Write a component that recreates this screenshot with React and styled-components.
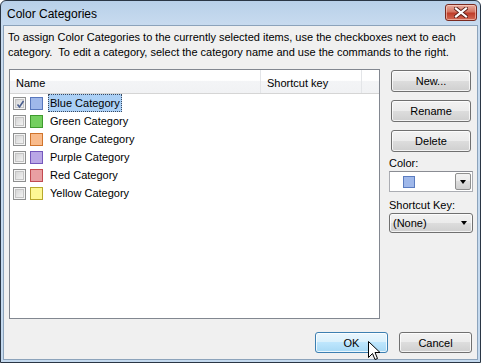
import React from 'react';
import styled, { createGlobalStyle } from 'styled-components';

const Global = createGlobalStyle`
  html, body { margin: 0; padding: 0; background: #ffffff; }
  body {
    font-family: "Liberation Sans", Arial, sans-serif;
    font-size: 11px;
    color: #000;
  }
  * { box-sizing: border-box; }
`;

const Window = styled.div`
  position: relative;
  width: 481px;
  height: 363px;
  border: 1px solid #2a3645;
  border-radius: 6px 6px 0 0;
  background: linear-gradient(#b8d0e9, #c8dbef 24px, #c4d9ee);
  display: flex;
  flex-direction: column;
  overflow: hidden;
`;

const TitleBar = styled.div`
  height: 24px;
  flex: none;
  display: flex;
  align-items: center;
  padding-left: 6px;
  padding-top: 2px;
  font-size: 12px;
  color: #000;
`;

const CloseButton = styled.div`
  position: absolute;
  top: 3px;
  right: 3px;
  width: 32px;
  height: 17px;
  border: 1px solid #7a2a20;
  border-radius: 3px;
  background: linear-gradient(#e8ab9e, #d47562 45%, #bf3d2a 55%, #d26a55);
  box-shadow: inset 0 0 0 1px rgba(255, 220, 210, 0.55);
  display: flex;
  align-items: center;
  justify-content: center;
`;

const Client = styled.div`
  flex: 1;
  margin: 0 2px 2px 2px;
  border: 1px solid #8ca3bb;
  background: #f0f0f0;
  display: flex;
  flex-direction: column;
`;

const Description = styled.div`
  padding: 4px 0 0 4px;
  line-height: 15px;
  white-space: nowrap;
`;

const Body = styled.div`
  display: flex;
  margin-top: 9px;
  padding-left: 5px;
`;

const ListBox = styled.div`
  width: 371px;
  height: 250px;
  border: 1px solid #828790;
  background: #fff;
  display: flex;
  flex-direction: column;
`;

const Header = styled.div`
  display: flex;
  height: 24px;
  border-bottom: 1px solid #d5d5d5;
  background: linear-gradient(#ffffff, #ffffff 45%, #f3f4f6 50%, #f1f2f4);
  flex: none;
`;

const HeaderCell = styled.div`
  width: ${p => p.$w}px;
  flex: ${p => (p.$w ? 'none' : '1')};
  border-right: ${p => (p.$last ? 'none' : '1px solid #e3e5e8')};
  display: flex;
  align-items: center;
  padding-left: 6px;
  padding-top: 3px;
`;

const Rows = styled.div`
  display: flex;
  flex-direction: column;
`;

const Row = styled.div`
  height: 18px;
  display: flex;
  align-items: center;
  padding-left: 3px;
`;

const CheckBox = styled.div`
  width: 13px;
  height: 13px;
  border: 1px solid #8e8f8f;
  background: #f4f4f4;
  padding: 1px;
  flex: none;
  display: flex;
`;

const CheckInner = styled.div`
  flex: 1;
  border: 1px solid #c4c4c4;
  background: linear-gradient(135deg, #d6d6d6, #f2f2f2);
  position: relative;
  display: flex;
  align-items: center;
  justify-content: center;
`;

const Swatch = styled.div`
  width: 13px;
  height: 13px;
  margin-left: 4px;
  border: 1px solid ${p => p.$border};
  background: ${p => p.$fill};
  flex: none;
`;

const Label = styled.div`
  margin-left: 5px;
  height: 18px;
  line-height: 17px;
  padding: 0 1px;
  border: 1px dotted ${p => (p.$selected ? '#3a4a60' : 'transparent')};
  background: ${p => (p.$selected ? '#abd0f6' : 'transparent')};
  white-space: nowrap;
`;

const Side = styled.div`
  width: 84px;
  margin-left: 9px;
  margin-top: 1px;
  display: flex;
  flex-direction: column;
`;

const Button = styled.div`
  height: ${p => p.$h || 22}px;
  width: ${p => p.$w || 80}px;
  margin: ${p => p.$m || '0'};
  border: 1px solid ${p => (p.$default ? '#3c7fb1' : '#707070')};
  border-radius: 3px;
  background: ${p =>
    p.$default
      ? 'linear-gradient(#eaf6fd, #d9f0fc 50%, #bee6fd 50%, #a7d9f5)'
      : 'linear-gradient(#f2f2f2, #ebebeb 50%, #dddddd 50%, #cfcfcf)'};
  box-shadow: inset 0 0 0 1px rgba(255, 255, 255, 0.75);
  display: flex;
  align-items: center;
  justify-content: center;
  flex: none;
`;

const FieldLabel = styled.div`
  line-height: 15px;
  margin-top: ${p => p.$mt}px;
`;

const ColorCombo = styled.div`
  height: 21px;
  border: 1px solid #abadb3;
  border-top-color: #8a8c93;
  background: #fff;
  display: flex;
  align-items: center;
  padding: 1px;
`;

const ComboSwatch = styled.div`
  width: 12px;
  height: 12px;
  margin-left: 12px;
  border: 1px solid #5b7cc0;
  background: #9fb8ea;
`;

const DropButton = styled.div`
  margin-left: auto;
  width: 16px;
  height: 100%;
  border: 1px solid #8f8f8f;
  border-radius: 2px;
  background: linear-gradient(#f2f2f2, #ebebeb 50%, #dddddd 50%, #cfcfcf);
  display: flex;
  align-items: center;
  justify-content: center;
`;

const Arrow = styled.div`
  width: 0;
  height: 0;
  border-left: 3.5px solid transparent;
  border-right: 3.5px solid transparent;
  border-top: 4px solid #000;
`;

const SelectCombo = styled.div`
  height: 20px;
  border: 1px solid #707070;
  border-radius: 3px;
  background: linear-gradient(#f2f2f2, #ebebeb 50%, #dddddd 50%, #cfcfcf);
  box-shadow: inset 0 0 0 1px rgba(255, 255, 255, 0.75);
  display: flex;
  align-items: center;
  padding: 0 5px 0 3px;
  justify-content: space-between;
`;

const Footer = styled.div`
  display: flex;
  justify-content: flex-end;
  gap: 11px;
  padding: 13px 5px 0 0;
`;

const Cursor = styled.svg`
  position: absolute;
  left: 367px;
  top: 340px;
`;

const categories = [
  { name: 'Blue Category', fill: '#9fb8ea', border: '#5877bd', checked: true },
  { name: 'Green Category', fill: '#74cf5f', border: '#3f9a2e' },
  { name: 'Orange Category', fill: '#f9bb8b', border: '#d0742c' },
  { name: 'Purple Category', fill: '#baa7e6', border: '#7558bd' },
  { name: 'Red Category', fill: '#e99fa2', border: '#c24a50' },
  { name: 'Yellow Category', fill: '#fdf894', border: '#b8a82c' },
];

export default function App() {
  return (
    <>
      <Global />
      <Window>
        <TitleBar>Color Categories</TitleBar>
        <CloseButton>
          <svg width="14" height="11" viewBox="0 0 14 11">
            <path d="M2 1.5 L12 9.5 M12 1.5 L2 9.5" stroke="#5a1f18" strokeWidth="4" strokeLinecap="square" />
            <path d="M2 1.5 L12 9.5 M12 1.5 L2 9.5" stroke="#ffffff" strokeWidth="2.2" strokeLinecap="square" />
          </svg>
        </CloseButton>
        <Client>
          <Description>
            To assign Color Categories to the currently selected items, use the checkboxes next to each
            <br />
            category.&nbsp; To edit a category, select the category name and use the commands to the right.
          </Description>
          <Body>
            <ListBox>
              <Header>
                <HeaderCell $w={251}>Name</HeaderCell>
                <HeaderCell $w={101}>Shortcut key</HeaderCell>
                <HeaderCell $last />
              </Header>
              <Rows>
                {categories.map((c, i) => (
                  <Row key={c.name}>
                    <CheckBox>
                      <CheckInner>
                        {c.checked && (
                          <svg width="9" height="9" viewBox="0 0 9 9" style={{ position: 'absolute', left: 0, top: 0 }}>
                            <path d="M1.5 4.5 L3.5 7 L7.5 1" stroke="#4b5f8e" strokeWidth="1.6" fill="none" />
                          </svg>
                        )}
                      </CheckInner>
                    </CheckBox>
                    <Swatch $fill={c.fill} $border={c.border} />
                    <Label $selected={i === 0}>{c.name}</Label>
                  </Row>
                ))}
              </Rows>
            </ListBox>
            <Side>
              <Button $m="0 0 8px 2px">New...</Button>
              <Button $m="0 0 8px 2px">Rename</Button>
              <Button $m="0 0 0 2px">Delete</Button>
              <FieldLabel $mt={4}>Color:</FieldLabel>
              <ColorCombo>
                <ComboSwatch />
                <DropButton>
                  <Arrow />
                </DropButton>
              </ColorCombo>
              <FieldLabel $mt={6}>Shortcut Key:</FieldLabel>
              <SelectCombo>
                <span>(None)</span>
                <Arrow />
              </SelectCombo>
            </Side>
          </Body>
          <Footer>
            <Button $default $w={73} $h={21}>OK</Button>
            <Button $w={73} $h={21}>Cancel</Button>
          </Footer>
        </Client>
        <Cursor width="13" height="21" viewBox="0 0 13 21">
          <path
            d="M0.5 0.5 L0.5 16.5 L4.5 12.5 L7 18.5 L9.5 17.5 L7 11.5 L12 11.5 Z"
            fill="#fff"
            stroke="#000"
            strokeWidth="1"
            strokeLinejoin="miter"
          />
        </Cursor>
      </Window>
    </>
  );
}
